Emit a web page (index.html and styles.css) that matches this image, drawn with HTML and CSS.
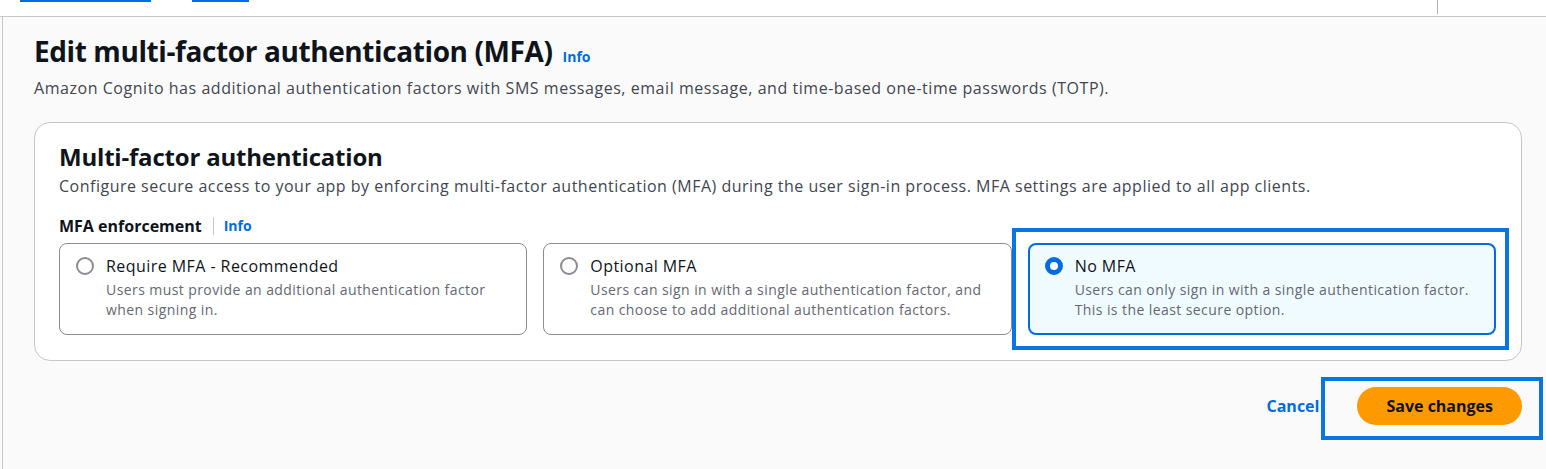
FILE: index.html
```html
<!DOCTYPE html>
<html lang="en">
<head>
<meta charset="utf-8">
<title>Edit multi-factor authentication (MFA)</title>
<link rel="stylesheet" href="styles.css">
</head>
<body>
<div class="topbar">
  <span class="crumb crumb-a"></span>
  <span class="crumb crumb-b"></span>
  <span class="topbar-spacer"></span>
  <span class="topbar-divider"></span>
</div>
<main class="main">
  <header class="page-header">
    <div class="title-row">
      <h1 class="page-title">Edit multi-factor authentication (MFA)</h1>
      <a class="info-link">Info</a>
    </div>
    <p class="page-desc">Amazon Cognito has additional authentication factors with SMS messages, email message, and time-based one-time passwords (TOTP).</p>
  </header>

  <section class="container">
    <h2 class="container-title">Multi-factor authentication</h2>
    <p class="container-desc">Configure secure access to your app by enforcing multi-factor authentication (MFA) during the user sign-in process. MFA settings are applied to all app clients.</p>
    <div class="field-label">
      <span class="label-text">MFA enforcement</span>
      <span class="label-divider"></span>
      <a class="info-link info-small">Info</a>
    </div>
    <div class="tiles">
      <div class="tile">
        <span class="radio"></span>
        <div class="tile-body">
          <div class="tile-title">Require MFA - Recommended</div>
          <div class="tile-desc">Users must provide an additional authentication factor when signing in.</div>
        </div>
      </div>
      <div class="tile">
        <span class="radio"></span>
        <div class="tile-body">
          <div class="tile-title">Optional MFA</div>
          <div class="tile-desc">Users can sign in with a single authentication factor, and can choose to add additional authentication factors.</div>
        </div>
      </div>
      <div class="tile tile-selected">
        <span class="radio radio-checked"></span>
        <div class="tile-body">
          <div class="tile-title">No MFA</div>
          <div class="tile-desc">Users can only sign in with a single authentication factor. This is the least secure option.</div>
        </div>
        <span class="highlight highlight-tile"></span>
      </div>
    </div>
  </section>

  <div class="actions">
    <a class="cancel">Cancel</a>
    <div class="save-wrap">
      <button class="save">Save changes</button>
      <span class="highlight highlight-save"></span>
    </div>
  </div>
</main>
</body>
</html>
```

FILE: styles.css
```css
* { box-sizing: border-box; }

html, body {
  margin: 0;
  padding: 0;
}

body {
  background: #fafafa;
  font-family: "Open Sans", "Noto Sans", Arial, sans-serif;
  color: #0f141a;
  height: 469px;
  overflow: hidden;
}

.topbar {
  height: 17px;
  background: #ffffff;
  border-bottom: 1px solid #c6c6cd;
  display: flex;
  align-items: flex-start;
}

.crumb {
  height: 2px;
  background: #006ce0;
}
.crumb-a { margin-left: 20px; width: 131px; }
.crumb-b { margin-left: 41px; width: 57px; }
.topbar-spacer { flex: 1; }
.topbar-divider {
  width: 1px;
  height: 14px;
  background: #b4b4bb;
  margin-right: 108px;
}

.main {
  margin-left: 2px;
  border-left: 1px solid #c6c6cd;
  padding: 16px 24px 40px 31px;
  min-height: 452px;
}

.title-row {
  display: flex;
  align-items: baseline;
  gap: 10px;
}

.page-title {
  margin: 0;
  font-size: 28px;
  line-height: 36px;
  font-weight: 700;
  letter-spacing: -0.4px;
}

.info-link {
  color: #006ce0;
  font-weight: 700;
  font-size: 14px;
  line-height: 18px;
  text-decoration: none;
}

.page-desc {
  margin: 9px 0 0;
  font-size: 16px;
  line-height: 20px;
  color: #424650;
  letter-spacing: 0.54px;
}

.container {
  margin-top: 24px;
  background: #ffffff;
  border: 1px solid #c6c6cd;
  border-radius: 16px;
  padding: 19px 25px 25px 24px;
}

.container-title {
  margin: 0;
  font-size: 24px;
  line-height: 30px;
  font-weight: 700;
  letter-spacing: -0.2px;
}

.container-desc {
  margin: 4px 0 0;
  font-size: 16px;
  line-height: 20px;
  color: #424650;
  letter-spacing: 0.5px;
}

.field-label {
  margin: 21px 0 0;
  display: flex;
  align-items: center;
  height: 18px;
}

.label-text {
  font-size: 16px;
  font-weight: 700;
  line-height: 18px;
}

.label-divider {
  width: 1px;
  height: 18px;
  background: #c6c6cd;
  margin: 0 10px 0 11px;
}

.info-small { font-size: 14px; }

.tiles {
  margin-top: 8px;
  display: grid;
  grid-template-columns: repeat(3, 1fr);
  gap: 16px;
}

.tile {
  position: relative;
  display: flex;
  align-items: flex-start;
  border: 1px solid #8c8c94;
  border-radius: 8px;
  padding: 12px 16px 14px 16px;
  height: 92px;
  background: #ffffff;
}

.tile-selected {
  border: 2px solid #006ce0;
  background: #f0fbff;
  padding: 11px 15px 13px 15px;
}

.radio {
  flex: none;
  width: 18px;
  height: 18px;
  margin-top: 1px;
  margin-right: 12px;
  border-radius: 50%;
  border: 2px solid #8c8c94;
  background: #ffffff;
}

.radio-checked {
  border: 5px solid #006ce0;
}

.tile-body {
  flex: 1;
}

.tile-title {
  font-size: 16px;
  line-height: 20px;
  color: #0f141a;
  letter-spacing: 0.44px;
}

.tile-desc {
  margin-top: 4px;
  font-size: 14px;
  line-height: 20px;
  color: #656871;
  letter-spacing: 0.42px;
}

.highlight {
  position: absolute;
  border: 4px solid #0a74e2;
  pointer-events: none;
}

.highlight-tile {
  left: -18px;
  top: -17px;
  right: -15px;
  bottom: -17px;
}

.actions {
  margin-top: 26px;
  display: flex;
  justify-content: flex-end;
  align-items: center;
  gap: 38px;
}

.cancel {
  color: #006ce0;
  font-weight: 700;
  font-size: 16px;
  line-height: 20px;
}

.save-wrap {
  position: relative;
}

.save {
  display: block;
  height: 38px;
  padding: 0 29px;
  border: none;
  border-radius: 20px;
  background: #ff9900;
  color: #0f141a;
  font-family: inherit;
  font-size: 16px;
  font-weight: 700;
}

.highlight-save {
  left: -36px;
  top: -10px;
  right: -21px;
  bottom: -15px;
}
```
